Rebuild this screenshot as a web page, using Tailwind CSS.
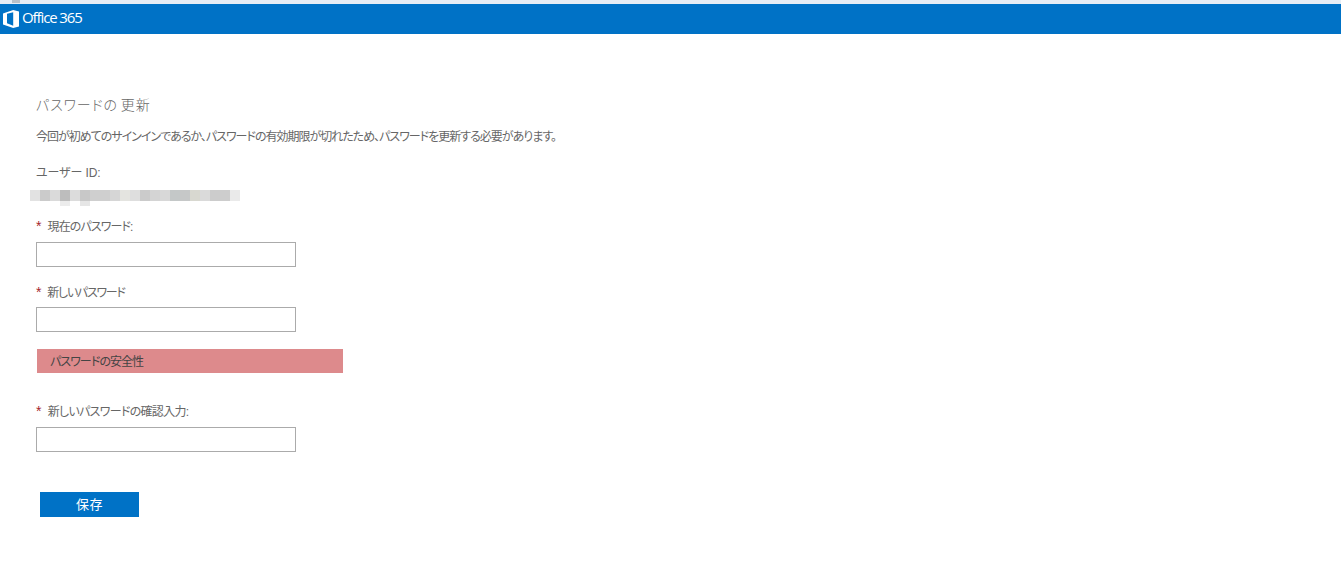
<!DOCTYPE html>
<html lang="ja">
<head>
  <meta charset="UTF-8" />
  <title>パスワードの更新</title>
  <script src="https://cdn.jsdelivr.net/npm/@tailwindcss/browser@4"></script>
</head>
<body class="bg-white h-[564px] overflow-hidden text-[#666] font-['Liberation_Sans','Noto_Sans_CJK_JP',sans-serif] [font-feature-settings:'palt']">
  <!-- top strip + header -->
  <div class="h-[4px] bg-[#e6edf5]">
    <div class="ml-[12px] w-[8px] h-[3px] bg-[#b9c1c9]"></div>
  </div>
  <header class="h-[30px] bg-[#0072c6] flex items-center pl-[3px] text-white">
    <svg class="w-[16px] h-[18px]" viewBox="0 0 16 18" fill="#fff">
      <path d="M0 3.4 10.2 0 16 1.6V16.4L10.2 18 0 14.6ZM10.2 2.2 4 3.8V13.2L10.2 15.8Z" fill-rule="evenodd"/>
    </svg>
    <span class="ml-[3px] -mt-[3px] text-[15px] tracking-[-1.1px] font-['Open_Sans',sans-serif]">Office 365</span>
  </header>

  <main class="pl-[36px] pt-[61px]">
    <h1 class="text-[14px] leading-[20px] tracking-[0.9px] [word-spacing:-2px] font-light text-[#666]">パスワードの 更新</h1>
    <p class="mt-[13px] text-[12px] leading-[18px] tracking-[-1px]">今回が初めてのサインインであるか、パスワードの有効期限が切れたため、パスワードを更新する必要があります。</p>

    <p class="mt-[18px] text-[12px] leading-[18px] tracking-[-0.1px]">ユーザー ID:</p>
    <!-- blurred user id -->
    <div id="blur" class="-ml-[6px] mt-[8px] flex h-[11px] w-[210px]"></div>
    <div class="-ml-[6px] flex h-[5px]">
      <div class="ml-[30px] w-[10px] bg-[#ececec]"></div><div class="ml-[10px] w-[10px] bg-[#e6e6e6]"></div>
    </div>

    <label class="block mt-[12px] text-[12px] leading-[18px] tracking-[-0.9px]"><span class="text-[#a4262c] text-[14px] leading-[14px] mr-[7px]">*</span>現在のパスワード:</label>
    <input type="password" class="block mt-[6px] w-[260px] h-[25px] bg-white border border-[#ababab]" />

    <label class="block mt-[17px] text-[12px] leading-[18px] tracking-[-1.25px]"><span class="text-[#a4262c] text-[14px] leading-[14px] mr-[7px]">*</span>新しいパスワード</label>
    <input type="password" class="block mt-[5px] w-[260px] h-[25px] bg-white border border-[#ababab]" />

    <div class="mt-[17px] ml-[1px] w-[306px] h-[24px] bg-[#dd8a8c] pl-[13px] text-[12px] leading-[27px] tracking-[-0.95px] text-[#444]">パスワードの安全性</div>

    <label class="block mt-[30px] text-[12px] leading-[18px] tracking-[-0.7px]"><span class="text-[#a4262c] text-[14px] leading-[14px] mr-[7px]">*</span>新しいパスワードの確認入力:</label>
    <input type="password" class="block mt-[6px] w-[260px] h-[25px] bg-white border border-[#ababab]" />

    <button class="block mt-[40px] ml-[4px] w-[99px] h-[25px] bg-[#0072c6] text-white text-[13px] tracking-[0.5px]">保存</button>
  </main>

  <script>
    const shades = ['#e2e2e2','#cbcbcb','#dadada','#bdbdbd','#dcdcdc','#c8c8c8','#cfcfcf','#cfcfcf','#d6d6d6','#e4e4e0','#dedede','#cbcbcb','#d4d4d4','#d8d8d8','#c4c8c8','#c6c8c8','#d8d8d0','#dadada','#cccccc','#cdcdcd','#eaeaea'];
    const blur = document.getElementById('blur');
    shades.forEach(c => {
      const d = document.createElement('div');
      d.className = 'w-[10px]';
      d.style.background = c;
      blur.appendChild(d);
    });
  </script>
</body>
</html>
